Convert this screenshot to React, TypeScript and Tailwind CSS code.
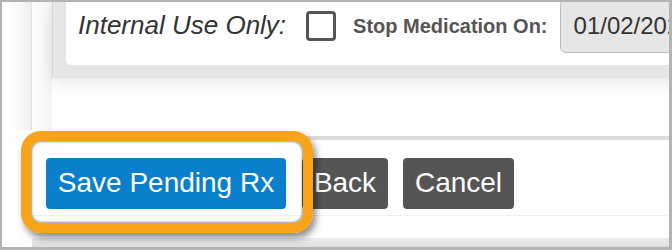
import React from "react";

export default function App() {
  return (
    <div
      className="relative w-[672px] h-[250px] bg-white border-t-2 border-l-2 border-r-[3px] border-b-[3px] border-[#b3b3b3] overflow-hidden flex flex-col"
      style={{ fontFamily: '"Liberation Sans", Arial, sans-serif' }}
    >
      {/* top section */}
      <div className="flex h-[128px] shrink-0">
        <div className="w-[29px] bg-linear-to-r from-white from-30% to-[#f0f0f0]" />
        <div className="w-px bg-[#e3e3e3]" />
        <div className="w-[20px] bg-linear-to-r from-white to-[#f3f3f3]" />
        <div className="flex-1 flex flex-col min-w-0">
          <div className="h-[76px] bg-[#e5e5e5] border-l border-[#d6d6d6] pl-[13px] pb-[13px] shadow-[0_5px_14px_rgba(0,0,0,0.10)] w-[700px]">
            <div className="h-[63px] bg-white rounded-bl-[5px] pl-[12px]">
              <div className="h-[48px] flex items-center whitespace-nowrap">
                <span className="text-[26px] italic leading-none text-[#333333] mb-[2px]">
                  Internal Use Only:
                </span>
                <span className="ml-[20px] w-[30px] h-[30px] border-[3px] border-[#555555] rounded-[4px] bg-white shrink-0" />
                <span className="ml-[17px] text-[20px] font-bold leading-none text-[#555555]">
                  Stop Medication On:
                </span>
                <div className="ml-[12px] h-[54px] w-[150px] shrink-0 bg-[#e6e6e6] border border-[#bdbdbd] rounded-[6px] pl-[13px] flex items-center text-[24px] leading-none text-[#333333]">
                  01/02/2023
                </div>
              </div>
            </div>
          </div>
        </div>
      </div>

      {/* footer */}
      <div className="pl-[30px] flex flex-col flex-1">
        <div className="mt-[6px] border-t-4 border-[#dcdcdc] pt-[18px] pl-[14px] pb-[6px] border-b border-b-[#efefef] flex items-center">
          <button className="w-[240px] h-[51px] rounded-[4px] bg-[#0a80cc] text-white text-[28px] leading-none flex items-center justify-center pb-[2px]">
            Save Pending Rx
          </button>
          <button className="ml-[16px] w-[86px] h-[51px] rounded-[4px] bg-[#555555] text-white text-[28px] leading-none flex items-center justify-center pb-[2px]">
            Back
          </button>
          <button className="ml-[15px] w-[111px] h-[51px] rounded-[4px] bg-[#555555] text-white text-[28px] leading-none flex items-center justify-center pb-[2px]">
            Cancel
          </button>
        </div>
        <div className="h-[22px]" />
        <div className="h-[9px] bg-linear-to-b from-[#ececec] to-[#dedede]" />
      </div>

      {/* orange highlight ring */}
      <div className="pointer-events-none absolute left-[19px] top-[129px] w-[292px] h-[102px] border-[10px] border-[#f9a31b] rounded-[20px] shadow-[3px_5px_7px_rgba(0,0,0,0.45),inset_0_0_3px_rgba(0,0,0,0.8)]" />
    </div>
  );
}
